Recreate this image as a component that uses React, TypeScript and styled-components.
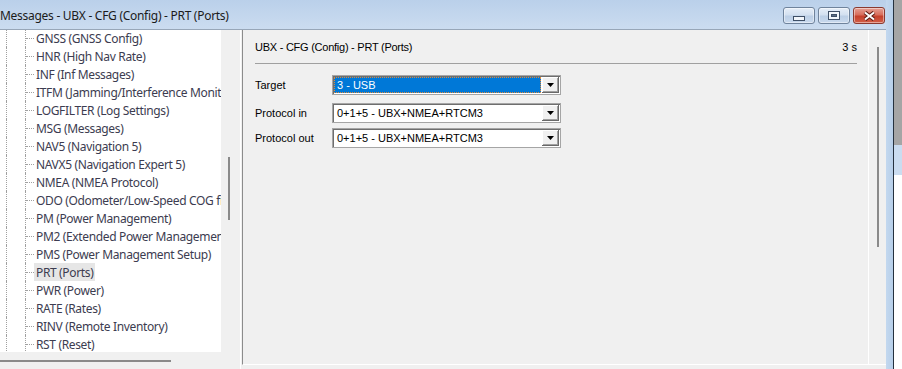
import React from "react";
import styled, { createGlobalStyle } from "styled-components";

const Global = createGlobalStyle`
  html, body { margin: 0; padding: 0; background: #f0f0f0; overflow: hidden; }
  #root { width: 902px; height: 369px; }
`;

const Window = styled.div`
  display: flex;
  width: 902px;
  height: 369px;
  overflow: hidden;
`;

const Main = styled.div`
  display: flex;
  flex-direction: column;
  width: 886px;
  flex: none;
`;

const TitleBar = styled.div`
  height: 29px;
  flex: none;
  display: flex;
  background: linear-gradient(#bad0ea, #cbdcf0);
  border-bottom: 1px solid #97a6b8;
`;

const Title = styled.div`
  flex: 1;
  font-family: "Noto Sans", sans-serif;
  font-size: 12px;
  letter-spacing: -0.28px;
  line-height: 16px;
  padding-top: 8px;
  color: #1b1b1b;
  white-space: nowrap;
`;

const Controls = styled.div`
  display: flex;
  gap: 3px;
  margin-top: 7px;
  margin-right: 1px;
`;

const WinButton = styled.div<{ $close?: boolean }>`
  width: 32px;
  height: 17px;
  box-sizing: border-box;
  border: 1px solid ${(p) => (p.$close ? "#8a3a30" : "#6f839c")};
  border-radius: 3px;
  background: ${(p) =>
    p.$close
      ? "linear-gradient(#e5a094 0%, #d86e5c 45%, #c5402b 55%, #d25f48 100%)"
      : "linear-gradient(#e6eef8 0%, #d3e0f0 45%, #bccfe6 55%, #c9d9ee 100%)"};
  box-shadow: inset 0 0 0 1px rgba(255, 255, 255, 0.45);
  display: flex;
  align-items: center;
  justify-content: center;
`;

const Body = styled.div`
  flex: 1;
  display: flex;
  align-items: flex-start;
  background: #f0f0f0;
`;

const LeftPane = styled.div`
  width: 240px;
  flex: none;
  height: 339px;
  border-right: 1px solid #ffffff;
  display: flex;
  flex-direction: column;
`;

const TreeArea = styled.div`
  display: flex;
  height: 322px;
  flex: none;
`;

const Tree = styled.div`
  width: 221px;
  flex: none;
  background: #ffffff;
  overflow: hidden;
`;

const TreeList = styled.div`
  margin-top: -1px;
`;

const TreeRow = styled.div`
  display: flex;
  height: 18px;
`;

const Guide = styled.div`
  width: 18px;
  margin-left: 6px;
  flex: none;
  border-left: 1px dotted #a0a0a0;
`;

const Branch = styled.div`
  width: 8px;
  flex: none;
  border-left: 1px dotted #a0a0a0;
  display: flex;
  align-items: center;
`;

const Stub = styled.div`
  width: 8px;
  border-top: 1px dotted #a0a0a0;
`;

const TreeLabel = styled.div<{ $selected?: boolean }>`
  display: flex;
  align-items: center;
  padding: 0 2px;
  white-space: nowrap;
  font-family: "Noto Sans", sans-serif;
  font-size: 12px;
  letter-spacing: -0.35px;
  color: #3c3c50;
  background: ${(p) => (p.$selected ? "#e6e6e6" : "transparent")};
`;

const VScroll = styled.div<{ $top: number }>`
  flex: none;
  width: 19px;
  box-sizing: border-box;
  padding-top: ${(p) => p.$top}px;
`;

const VThumb = styled.div<{ $h: number; $left: number }>`
  width: 2px;
  height: ${(p) => p.$h}px;
  margin-left: ${(p) => p.$left}px;
  background: #8a8a8a;
`;

const HScroll = styled.div`
  height: 17px;
  box-sizing: border-box;
  padding-top: 8px;
`;

const HThumb = styled.div`
  width: 171px;
  height: 2px;
  background: #8a8a8a;
`;

const DetailPane = styled.div`
  flex: 1;
  height: 334px;
  margin-left: 1px;
  border-left: 1px solid #8c8c8c;
  border-bottom: 1px solid #ffffff;
  display: flex;
`;

const Content = styled.div`
  flex: 1;
  padding: 0 12px;
  font-family: "Liberation Sans", Arial, sans-serif;
  font-size: 11px;
  color: #000;
`;

const ScrollCol = styled(VScroll)`
  width: 18px;
  border-left: 1px solid #ffffff;
`;

const Header = styled.div`
  height: 34px;
  box-sizing: border-box;
  padding-top: 10px;
  line-height: 14px;
  display: flex;
  justify-content: space-between;
  border-bottom: 1px solid #a0a0a0;
  margin-right: -1px;
`;

const HeaderTitle = styled.span`
  letter-spacing: -0.25px;
`;

const Form = styled.div`
  margin-top: 11px;
  display: flex;
  flex-direction: column;
`;

const FormRow = styled.div<{ $gap: number }>`
  display: grid;
  grid-template-columns: 77px 229px;
  align-items: center;
  margin-bottom: ${(p) => p.$gap}px;
`;

const Label = styled.div`
  white-space: nowrap;
`;

const Combo = styled.div`
  height: 20px;
  box-sizing: border-box;
  border: 1px solid #a5a5a5;
  box-shadow: inset 1px 1px 0 #6e6e6e;
  background: #ffffff;
  padding: 1px;
  display: flex;
`;

const Value = styled.div<{ $selected?: boolean }>`
  flex: 1;
  display: flex;
  align-items: center;
  padding-left: 2px;
  margin-right: 1px;
  white-space: nowrap;
  border: 1px dotted ${(p) => (p.$selected ? "#e08a3a" : "transparent")};
  background: ${(p) => (p.$selected ? "#0078d7" : "transparent")};
  color: ${(p) => (p.$selected ? "#ffffff" : "#000000")};
`;

const DropButton = styled.div`
  width: 17px;
  flex: none;
  background: #f0f0f0;
  box-shadow: inset -1px -1px 0 #696969, inset 1px 1px 0 #ffffff,
    inset -2px -2px 0 #a0a0a0;
  display: flex;
  align-items: center;
  justify-content: center;
`;

const RightFrame = styled.div`
  width: 7px;
  flex: none;
  background: linear-gradient(to right, #c3d8ef, #b7cfe9);
`;

const FrameEdge = styled.div`
  width: 1px;
  flex: none;
  background: #25313e;
`;

const Backdrop = styled.div`
  flex: 1;
  display: flex;
  flex-direction: column;
  background: #ffffff;
`;

const BackdropBlock = styled.div<{ $h: number; $c: string }>`
  height: ${(p) => p.$h}px;
  background: ${(p) => p.$c};
`;

const items = [
  "GNSS (GNSS Config)",
  "HNR (High Nav Rate)",
  "INF (Inf Messages)",
  "ITFM (Jamming/Interference Monitor)",
  "LOGFILTER (Log Settings)",
  "MSG (Messages)",
  "NAV5 (Navigation 5)",
  "NAVX5 (Navigation Expert 5)",
  "NMEA (NMEA Protocol)",
  "ODO (Odometer/Low-Speed COG filter)",
  "PM (Power Management)",
  "PM2 (Extended Power Management)",
  "PMS (Power Management Setup)",
  "PRT (Ports)",
  "PWR (Power)",
  "RATE (Rates)",
  "RINV (Remote Inventory)",
  "RST (Reset)",
];

const Arrow = () => (
  <svg width="7" height="4" viewBox="0 0 7 4">
    <path d="M0 0H7L3.5 4Z" fill="#000" />
  </svg>
);

const MinIcon = () => (
  <svg width="14" height="7" viewBox="0 0 14 7" style={{ marginTop: 6 }}>
    <rect x="1.5" y="1.5" width="11" height="4" fill="#f2f6fb" stroke="#3f4f66" />
  </svg>
);

const MaxIcon = () => (
  <svg width="12" height="9" viewBox="0 0 12 9">
    <rect x="0.5" y="0.5" width="11" height="8" fill="#f2f6fb" stroke="#3f4f66" />
    <rect x="3.5" y="3.5" width="5" height="2" fill="#5a6b82" stroke="#3f4f66" />
  </svg>
);

const CloseIcon = () => (
  <svg width="13" height="10" viewBox="0 0 13 10">
    <path d="M2 1.5L11 8.5M11 1.5L2 8.5" stroke="#5b1d14" strokeWidth="4" />
    <path d="M2 1.5L11 8.5M11 1.5L2 8.5" stroke="#ffffff" strokeWidth="2" />
  </svg>
);

const fields = [
  { label: "Target", value: "3 - USB", selected: true, gap: 8 },
  { label: "Protocol in", value: "0+1+5 - UBX+NMEA+RTCM3", selected: false, gap: 5 },
  { label: "Protocol out", value: "0+1+5 - UBX+NMEA+RTCM3", selected: false, gap: 5 },
];

export default function App() {
  return (
    <>
      <Global />
      <Window>
        <Main>
          <TitleBar>
            <Title>Messages - UBX - CFG (Config) - PRT (Ports)</Title>
            <Controls>
              <WinButton>
                <MinIcon />
              </WinButton>
              <WinButton>
                <MaxIcon />
              </WinButton>
              <WinButton $close>
                <CloseIcon />
              </WinButton>
            </Controls>
          </TitleBar>
          <Body>
            <LeftPane>
              <TreeArea>
                <Tree>
                  <TreeList>
                    {items.map((it) => (
                      <TreeRow key={it}>
                        <Guide />
                        <Branch>
                          <Stub />
                        </Branch>
                        <TreeLabel $selected={it === "PRT (Ports)"}>{it}</TreeLabel>
                      </TreeRow>
                    ))}
                  </TreeList>
                </Tree>
                <VScroll $top={127}>
                  <VThumb $h={63} $left={7} />
                </VScroll>
              </TreeArea>
              <HScroll>
                <HThumb />
              </HScroll>
            </LeftPane>
            <DetailPane>
              <Content>
                <Header>
                  <HeaderTitle>UBX - CFG (Config) - PRT (Ports)</HeaderTitle>
                  <span>3 s</span>
                </Header>
                <Form>
                  {fields.map((f) => (
                    <FormRow key={f.label} $gap={f.gap}>
                      <Label>{f.label}</Label>
                      <Combo>
                        <Value $selected={f.selected}>{f.value}</Value>
                        <DropButton>
                          <Arrow />
                        </DropButton>
                      </Combo>
                    </FormRow>
                  ))}
                </Form>
              </Content>
              <ScrollCol $top={17}>
                <VThumb $h={200} $left={8} />
              </ScrollCol>
            </DetailPane>
          </Body>
        </Main>
        <RightFrame />
        <FrameEdge />
        <Backdrop>
          <BackdropBlock $h={145} $c="#a5a5a5" />
          <BackdropBlock $h={30} $c="#cadcf0" />
        </Backdrop>
      </Window>
    </>
  );
}
